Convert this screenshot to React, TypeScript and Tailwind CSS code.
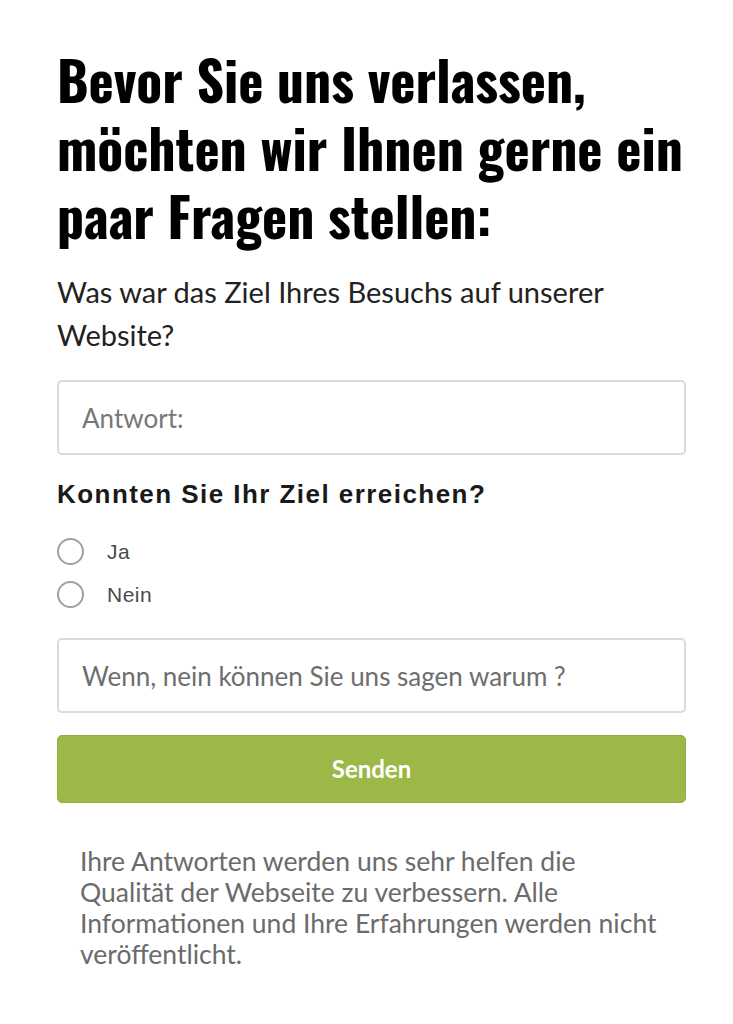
import React, { useState } from "react";

type Answer = "ja" | "nein" | null;

const options: { id: "ja" | "nein"; label: string }[] = [
  { id: "ja", label: "Ja" },
  { id: "nein", label: "Nein" },
];

export default function App() {
  const [goal, setGoal] = useState("");
  const [reached, setReached] = useState<Answer>(null);
  const [reason, setReason] = useState("");

  return (
    <div className="min-h-screen w-[733px] bg-white">
      <div className="pl-[57px] pr-[47px] pt-[45px]">
        <h1 className="font-['Oswald',sans-serif] text-[53.6px] font-bold leading-[68px] text-black">
          Bevor Sie uns verlassen,
          <br />
          möchten wir Ihnen gerne ein
          <br />
          paar Fragen stellen:
        </h1>

        <p className="mt-[21px] font-['Lato',sans-serif] text-[29px] leading-[43px] text-[#222]">
          Was war das Ziel Ihres Besuchs auf unserer
          <br />
          Website?
        </p>

        <input
          value={goal}
          onChange={(e) => setGoal(e.target.value)}
          placeholder="Antwort:"
          className="mt-[24px] h-[75px] w-full rounded-[5px] border-2 border-[#dadade] px-[23px] font-['Lato',sans-serif] text-[26px] text-[#333] outline-none placeholder:text-[#777]"
        />

        <p className="mt-[24px] font-['Liberation_Sans',sans-serif] text-[26px] font-bold leading-[30px] tracking-[1.45px] text-[#1a1a1a]">
          Konnten Sie Ihr Ziel erreichen?
        </p>

        <div className="mt-[29px] flex flex-col gap-[16px]">
          {options.map((opt) => (
            <label
              key={opt.id}
              onClick={() => setReached(opt.id)}
              className="flex h-[27px] cursor-pointer items-center gap-[23px]"
            >
              <span className="grid h-[27px] w-[27px] place-items-center rounded-full border-2 border-[#a0a0a0] bg-white">
                {reached === opt.id && (
                  <span className="h-[13px] w-[13px] rounded-full bg-[#555]" />
                )}
              </span>
              <span className="font-['Liberation_Sans',sans-serif] text-[21px] tracking-[0.5px] text-[#4a4a4a]">
                {opt.label}
              </span>
            </label>
          ))}
        </div>

        <input
          value={reason}
          onChange={(e) => setReason(e.target.value)}
          placeholder="Wenn, nein können Sie uns sagen warum ?"
          className="mt-[30px] h-[75px] w-full rounded-[5px] border-2 border-[#dadade] px-[23px] font-['Lato',sans-serif] text-[26px] text-[#333] outline-none placeholder:text-[#6e6e6e]"
        />

        <button
          type="button"
          className="mt-[22px] h-[68px] w-full rounded-[5px] border border-[#93ad40] bg-[#9cb846] font-['Lato',sans-serif] text-[24px] font-bold text-white"
        >
          Senden
        </button>

        <p className="mt-[43px] pl-[23px] font-['Lato',sans-serif] text-[26.5px] leading-[31px] text-[#6b6b6b]">
          Ihre Antworten werden uns sehr helfen die
          <br />
          Qualität der Webseite zu verbessern. Alle
          <br />
          Informationen und Ihre Erfahrungen werden nicht
          <br />
          veröffentlicht.
        </p>
      </div>
    </div>
  );
}
